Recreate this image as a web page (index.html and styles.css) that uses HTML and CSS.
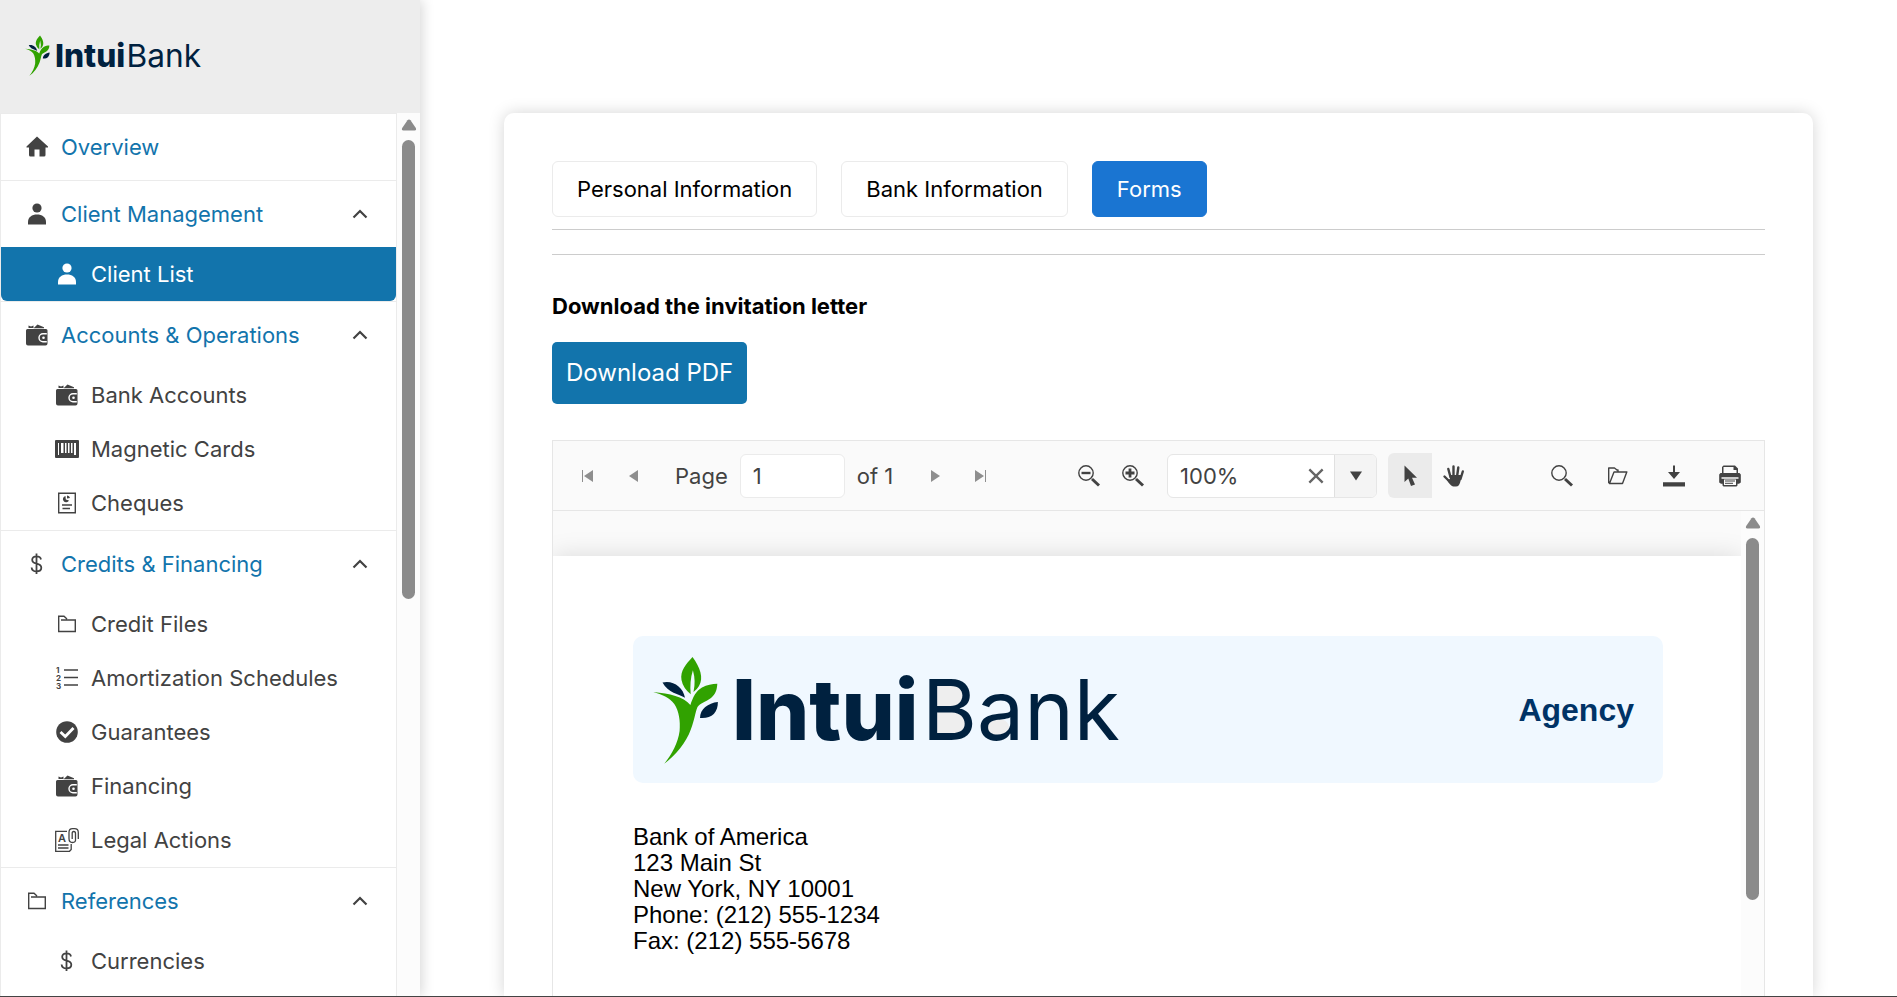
FILE: index.html
```html
<!DOCTYPE html>
<html lang="en">
<head>
<meta charset="utf-8">
<title>IntuiBank</title>
<link rel="stylesheet" href="styles.css">
</head>
<body>
<svg class="defs" aria-hidden="true">
  <symbol id="mark" viewBox="0 0 72 114">
    <path fill="#31a200" d="M42.500 4C50 14 54 25 49 33Q47 36.500 43.500 39Q46 28 42.900 17.300Q39.500 28 40.700 41.300Q33 35 31.500 27C30 18 36 11 42.500 4Z"/>
    <path fill="#31a200" d="M3.200 39C20 41 33 43 40.400 52C43 44 46 38 52 34.500C57 31.500 62 31 67.300 30.700C67 37 65.500 41 61 45C56 49 50 50 47.500 54C45 60 44.500 67 41 76C36 90 26 102 14.300 110.700C22 101 28 90 29.600 78C30.500 68 29 58 24.300 51C19.500 44.500 12 41.500 3.200 39Z"/>
    <path fill="#00213f" d="M12.500 29.500C23 27 33 34 35 44.700C29 41 18 40 12.500 29.500Z"/>
    <path fill="#00213f" d="M67.900 49C58 50 50 56 50 65C61 66 68 60 67.900 49Z"/>
  </symbol>
  <symbol id="home" viewBox="0 0 24 24"><path d="M12 1.500 23 11.500V12.500H20.500V20a1.500 1.500 0 0 1-1.500 1.500H14.500V14.500H9.500V21.500H5.500A1.500 1.500 0 0 1 4 20V12.500H1.500V11.500Z"/></symbol>
  <symbol id="user" viewBox="0 0 24 24"><circle cx="12" cy="6" r="4.600"/><path d="M3 22.500V20C3 15 7 12.500 12 12.500S21 15 21 20V22.500Z"/></symbol>
  <symbol id="wallet" viewBox="0 0 24 24"><path d="M3.500 5V2.500L6 3.500 8.500 2.500V5ZM8.500 5.300 12.500 1.500 19 4.200V5.300Z"/><path d="M2.500 6H21a1.500 1.500 0 0 1 1.500 1.500V20.500A2 2 0 0 1 20.500 22.500H3a2 2 0 0 1-2-2V7.500A1.500 1.500 0 0 1 2.500 6Z"/><path fill="none" stroke="#fff" stroke-width="1.400" d="M21.800 10.700H18a4 4 0 0 0 0 8H21.800"/><circle cx="18.500" cy="14.700" r="1.300" fill="#fff"/></symbol>
  <symbol id="barcode" viewBox="0 0 24 24"><path fill-rule="evenodd" d="M1 3H23a1 1 0 0 1 1 1V20a1 1 0 0 1-1 1H1a1 1 0 0 1-1-1V4A1 1 0 0 1 1 3ZM3 6V18H4V6ZM6 6V16H8.500V6ZM10 6V16H11.500V6ZM13 6V16H14.500V6ZM16 6V16H17.500V6ZM19 6V18H21V6Z"/></symbol>
  <symbol id="report" viewBox="0 0 24 24"><path fill="none" stroke="currentColor" stroke-width="1.400" d="M3.700 2.200H20.300V21.800H3.700ZM7 14H17M7.500 17.500H15"/><path d="M10.500 5A3.200 3.200 0 1 0 14 9.500L10.800 8.500ZM12 4.500V7.500L15 7A3 3 0 0 0 12 4.500Z"/></symbol>
  <symbol id="dollar" viewBox="0 0 24 24"><path fill="none" stroke="currentColor" stroke-width="1.800" d="M16 7.500C15.700 5.500 14 4.300 11.500 4.300S7.200 5.500 7.200 7.800 9 11.200 11.500 11.700 16.300 13 16.300 15.800 14 19.400 11.500 19.400 6.800 18 6.600 15.500M11.500 1.500V22"/></symbol>
  <symbol id="folder" viewBox="0 0 24 24"><path fill="none" stroke="currentColor" stroke-width="1.400" d="M6 8H20.300V19.500H3.700V4.200H9L12 7"/></symbol>
  <symbol id="check" viewBox="0 0 24 24"><circle cx="12" cy="12" r="10.800"/><path fill="none" stroke="#fff" stroke-width="2.800" d="M5.500 12 10.300 16.500 18.500 8"/></symbol>
  <symbol id="chevron" viewBox="0 0 24 24"><path fill="none" stroke="currentColor" stroke-width="2.200" d="M5.500 15.500 12 9 18.500 15.500"/></symbol>
  <symbol id="first" viewBox="0 0 24 24"><path d="M7 6H8V18H7ZM18 6V18L9 12Z"/></symbol>
  <symbol id="prev" viewBox="0 0 24 24"><path d="M17 6V18L8 12Z"/></symbol>
  <symbol id="next" viewBox="0 0 24 24"><path d="M8 6V18L17 12Z"/></symbol>
  <symbol id="last" viewBox="0 0 24 24"><path d="M16 6H17V18H16ZM6 6V18L15 12Z"/></symbol>
  <symbol id="search" viewBox="0 0 24 24"><g fill="none" stroke="currentColor"><circle cx="9" cy="9" r="7.200" stroke-width="1.400"/><path stroke-width="3" d="M15 15 22 21.500"/></g></symbol>
  <symbol id="zoomout" viewBox="0 0 24 24"><g fill="none" stroke="currentColor"><circle cx="9" cy="9" r="7.200" stroke-width="1.400"/><path stroke-width="3" d="M15 15 22 21.500"/><path stroke-width="2.400" d="M4.500 9H13.500"/></g></symbol>
  <symbol id="zoomin" viewBox="0 0 24 24"><g fill="none" stroke="currentColor"><circle cx="9" cy="9" r="7.200" stroke-width="1.400"/><path stroke-width="3" d="M15 15 22 21.500"/><path stroke-width="2.800" d="M4.500 9H13.500M9 4.500V13.500"/></g></symbol>
  <symbol id="close" viewBox="0 0 24 24"><path fill="none" stroke="currentColor" stroke-width="2.800" d="M4 4 20 20M20 4 4 20"/></symbol>
  <symbol id="caret" viewBox="0 0 24 24"><path d="M6 7.500H18L12 16.500Z"/></symbol>
  <symbol id="pointer" viewBox="0 0 24 24"><path d="M6.500 1.500V18L10.300 14.600 13 22 17 20.500 14 13.800H19Z"/></symbol>
  <symbol id="hand" viewBox="0 0 24 24"><path fill="none" stroke="currentColor" stroke-width="2.400" stroke-linecap="round" d="M2.500 12.500 8 18M6.300 5 8.500 13M11.500 2.500V12M16.300 3.500 15 13M20.800 7.500 18.500 15"/><path d="M7.400 11H19.600L18.500 17Q17.500 22.500 14 22.500H11.500Q9.500 22.500 6.500 18.500L5 16 8 15Z"/></symbol>
  <symbol id="open" viewBox="0 0 24 24"><path fill="none" stroke="currentColor" stroke-width="1.400" stroke-linejoin="round" d="M2.700 19.200V4H8.500L11 6M3.500 19.500H16.500L20.800 8H8ZM10.500 6H12V8"/></symbol>
  <symbol id="download" viewBox="0 0 24 24"><path d="M1 18.200H23V22.500H1ZM11 1.500H13V8H18L12 15 6 8H11Z"/></symbol>
  <symbol id="print" viewBox="0 0 24 24"><path fill-rule="evenodd" d="M4 9V3L5.500 1.500H17L20 4.500V9H21.500L22.800 10.500V18.500L21 19.700H19.500V21.500L18.500 22.500H5.500L4.500 21.500V19.700H3L1.200 18.500V10.500L2.500 9ZM5.500 3V9H18.500V6H15.500V3ZM6 15.500V21H18V15.500ZM3.500 13.300V14.700H20.500V13.300Z"/><path fill="none" stroke="currentColor" d="M7 17H17M7 19.300H15"/></symbol>
  <symbol id="arrow" viewBox="0 0 16 12"><path d="M8 .5Q8.900.5 9.500 1.200L14.800 9Q15.800 11.500 13.500 11.500H2.500Q.2 11.500 1.200 9L6.500 1.200Q7.100.5 8 .5Z"/></symbol>
</svg>
<div class="app">
  <aside class="sidebar">
    <header class="brand">
      <svg class="brand-logo" viewBox="0 0 488 114" role="img" aria-label="IntuiBank">
        <use href="#mark" width="72" height="114"/>
        <g class="word"><text x="82" y="87" class="word-bold">Intui</text><text x="272" y="87" class="word-light">Bank</text></g>
      </svg>
    </header>
    <div class="nav-wrap">
      <nav class="nav">
        <section class="group">
          <a class="head" href="#"><svg class="icon"><use href="#home"/></svg><span>Overview</span></a>
        </section>
        <section class="group">
          <a class="head" href="#"><svg class="icon"><use href="#user"/></svg><span>Client Management</span><svg class="icon chev"><use href="#chevron"/></svg></a>
          <a class="item active" href="#"><svg class="icon"><use href="#user"/></svg><span>Client List</span></a>
        </section>
        <section class="group">
          <a class="head" href="#"><svg class="icon"><use href="#wallet"/></svg><span>Accounts &amp; Operations</span><svg class="icon chev"><use href="#chevron"/></svg></a>
          <a class="item" href="#"><svg class="icon"><use href="#wallet"/></svg><span>Bank Accounts</span></a>
          <a class="item" href="#"><svg class="icon"><use href="#barcode"/></svg><span>Magnetic Cards</span></a>
          <a class="item" href="#"><svg class="icon"><use href="#report"/></svg><span>Cheques</span></a>
        </section>
        <section class="group">
          <a class="head" href="#"><svg class="icon"><use href="#dollar"/></svg><span>Credits &amp; Financing</span><svg class="icon chev"><use href="#chevron"/></svg></a>
          <a class="item" href="#"><svg class="icon"><use href="#folder"/></svg><span>Credit Files</span></a>
          <a class="item" href="#"><svg class="icon" viewBox="0 0 24 24"><path fill="none" stroke="currentColor" stroke-width="1.400" d="M9 4H23M9 11.500H23M9 19H23"/><g class="digits"><text x="1" y="7">1</text><text x="1" y="15">2</text><text x="1" y="23">3</text></g></svg><span>Amortization Schedules</span></a>
          <a class="item" href="#"><svg class="icon"><use href="#check"/></svg><span>Guarantees</span></a>
          <a class="item" href="#"><svg class="icon"><use href="#wallet"/></svg><span>Financing</span></a>
          <a class="item" href="#"><svg class="icon" viewBox="0 0 24 24"><path fill="none" stroke="currentColor" stroke-width="1.300" d="M12 3.300H.7V23.300H14.500L16.200 21.500V16M3 17H13.500M3 20H13.500M23.300 11V4.500Q23.300.7 19.500.7H17.500Q14 .7 14 4.500V10.500Q14 14.500 17.500 14.500T20.500 11V5.500Q20.500 3.500 18.800 3.500T17.200 5.500V11"/><text class="letter" x="3" y="14">A</text></svg><span>Legal Actions</span></a>
        </section>
        <section class="group">
          <a class="head" href="#"><svg class="icon"><use href="#folder"/></svg><span>References</span><svg class="icon chev"><use href="#chevron"/></svg></a>
          <a class="item" href="#"><svg class="icon"><use href="#dollar"/></svg><span>Currencies</span></a>
        </section>
      </nav>
      <div class="scroll"><svg class="scroll-up"><use href="#arrow"/></svg><div class="track"><div class="thumb nav-thumb"></div></div></div>
    </div>
  </aside>
  <main class="main">
    <div class="card">
      <div class="tabs">
        <button class="tab" type="button">Personal Information</button>
        <button class="tab" type="button">Bank Information</button>
        <button class="tab selected" type="button">Forms</button>
      </div>
      <hr class="rule">
      <hr class="rule second">
      <h2 class="title">Download the invitation letter</h2>
      <button class="pdf" type="button">Download PDF</button>
      <section class="viewer">
        <div class="toolbar">
          <div class="tools">
            <button class="tool dim" aria-label="First page"><svg class="icon"><use href="#first"/></svg></button>
            <button class="tool dim gap" aria-label="Previous page"><svg class="icon"><use href="#prev"/></svg></button>
            <label class="pager" for="page">Page</label>
            <input class="page-input" id="page" type="text" value="1">
            <span class="total">of 1</span>
            <button class="tool dim" aria-label="Next page"><svg class="icon"><use href="#next"/></svg></button>
            <button class="tool dim gap" aria-label="Last page"><svg class="icon"><use href="#last"/></svg></button>
          </div>
          <div class="tools">
            <button class="tool" aria-label="Zoom out"><svg class="icon"><use href="#zoomout"/></svg></button>
            <button class="tool" aria-label="Zoom in"><svg class="icon"><use href="#zoomin"/></svg></button>
            <div class="combo">
              <input class="zoom-input" type="text" value="100%" aria-label="Zoom level">
              <button class="clear" aria-label="Clear"><svg class="clear-icon"><use href="#close"/></svg></button>
              <button class="drop" aria-label="Open zoom levels"><svg class="icon"><use href="#caret"/></svg></button>
            </div>
            <button class="tool pressed" aria-label="Select text"><svg class="icon"><use href="#pointer"/></svg></button>
            <button class="tool" aria-label="Pan"><svg class="icon"><use href="#hand"/></svg></button>
          </div>
          <div class="tools spaced">
            <button class="tool" aria-label="Search"><svg class="icon"><use href="#search"/></svg></button>
            <button class="tool" aria-label="Open"><svg class="icon"><use href="#open"/></svg></button>
            <button class="tool" aria-label="Download"><svg class="icon"><use href="#download"/></svg></button>
            <button class="tool" aria-label="Print"><svg class="icon"><use href="#print"/></svg></button>
          </div>
        </div>
        <div class="canvas">
          <div class="canvas-body">
            <article class="sheet">
              <header class="letterhead">
                <svg class="letter-logo" viewBox="0 0 488 114" role="img" aria-label="IntuiBank">
                  <g fill="#eee"><path d="M282 30H306Q318 42 308 55H282ZM282 55H310Q324 70 310 83H282Z"/><ellipse cx="346" cy="74" rx="13" ry="9"/></g>
                  <use href="#mark" width="72" height="114"/>
                  <g class="word"><text x="82" y="87" class="word-bold">Intui</text><text x="272" y="87" class="word-light">Bank</text></g>
                </svg>
                <strong class="agency">Agency</strong>
              </header>
              <address class="address">Bank of America<br>123 Main St<br>New York, NY 10001<br>Phone: (212) 555-1234<br>Fax: (212) 555-5678</address>
            </article>
          </div>
          <div class="scroll"><svg class="scroll-up"><use href="#arrow"/></svg><div class="track"><div class="thumb doc-thumb"></div></div></div>
        </div>
      </section>
    </div>
  </main>
</div>
</body>
</html>
```

FILE: styles.css
```css
* { box-sizing: border-box; }

body {
  margin: 0;
  background: #fff;
  color: #000;
  font-family: Inter, "Open Sans", sans-serif;
  font-size: 22px;
  line-height: 30px;
}

button, input { font: inherit; color: inherit; margin: 0; }
button { cursor: pointer; }

.defs { position: absolute; width: 0; height: 0; }

.app {
  display: flex;
  height: 100vh;
  overflow: hidden;
  border-bottom: 1px solid #444;
}

.icon { display: block; flex: none; width: 24px; height: 24px; fill: currentColor; color: #424242; }
.digits { font-size: 8px; font-weight: 700; }
.letter { font-size: 11px; font-weight: 600; }

/* Sidebar */
.sidebar {
  flex: none;
  display: flex;
  flex-direction: column;
  width: 420px;
  background: #fff;
  box-shadow: 2px 0 12px rgba(0, 0, 0, .16);
}

.brand { flex: none; height: 113px; padding: 34px 24px; background: #ededed; }
.brand-logo { display: block; width: 184px; height: 43px; }

.word { font-family: Inter, sans-serif; font-size: 84px; fill: #00213f; }
.word-bold { font-weight: 800; }
.word-light { font-weight: 400; }

.nav-wrap { flex: 1; display: flex; min-height: 0; }
.nav { flex: 1; overflow: hidden; border: 1px solid #ebebeb; border-bottom: 0; }
.group { border-bottom: 1px solid #ebebeb; }
.group:last-child { border-bottom: 0; }

.head, .item { display: flex; align-items: center; gap: 12px; text-decoration: none; }
.head { height: 66px; padding: 0 24px; color: #1274ac; }
.item { height: 54px; padding: 0 24px 0 54px; color: #424242; }
.chev { margin-left: auto; }
.active { background: #1274ac; border-radius: 0 0 6px 6px; color: #fff; }
.active .icon { color: #fff; }

.scroll {
  flex: none;
  display: flex;
  flex-direction: column;
  align-items: center;
  gap: 9px;
  width: 23px;
  padding: 6px 0;
  background: #fcfcfc;
}
.scroll-up { flex: none; width: 16px; height: 12px; fill: #8b8b8b; }
.track { flex: 1; width: 13px; }
.thumb { border-radius: 7px; background: #8b8b8b; }
.nav-thumb { height: 54%; }
.doc-thumb { height: 80%; }

/* Content card */
.main { flex: 1; display: flex; min-width: 0; padding: 113px 84px 0; }
.card {
  flex: 1;
  display: flex;
  flex-direction: column;
  min-width: 0;
  padding: 48px 48px 0;
  border-radius: 10px 10px 0 0;
  box-shadow: 0 0 16px rgba(0, 0, 0, .17);
}

.tabs { display: flex; gap: 24px; }
.tab {
  height: 56px;
  padding: 0 24px;
  border: 1px solid #ebebeb;
  border-radius: 6px;
  background: #fff;
}
.selected { border-color: #1a75d2; background: #1a75d2; color: #fff; }

.rule { width: 100%; height: 1px; margin: 12px 0 0; border: 0; background: #ccc; }
.second { margin-top: 24px; }

.title { margin: 36px 0 0; font-size: 22px; line-height: 30px; font-weight: 700; }
.pdf {
  align-self: flex-start;
  height: 62px;
  margin-top: 21px;
  padding: 0 14px;
  border: 0;
  border-radius: 5px;
  background: #1274ac;
  color: #fff;
  font-size: 24px;
}

/* Document viewer */
.viewer {
  flex: 1;
  display: flex;
  flex-direction: column;
  min-height: 0;
  margin-top: 36px;
  border: 1px solid #e6e6e6;
  border-bottom: 0;
  background: #fafafa;
  color: #424242;
}
.toolbar {
  flex: none;
  display: flex;
  justify-content: space-between;
  align-items: center;
  height: 70px;
  padding: 0 12px;
  border-bottom: 1px solid #e6e6e6;
}
.tools { display: flex; align-items: center; }
.spaced { gap: 12px; }
.tool {
  display: flex;
  align-items: center;
  justify-content: center;
  width: 44px;
  height: 45px;
  padding: 0;
  border: 0;
  background: transparent;
}
.gap { margin-left: 2px; }
.dim .icon { color: #8e8e8e; }
.pressed { border-radius: 6px 0 0 6px; background: #ebebeb; }

.pager { margin: 0 12px 0 20px; }
.total { margin: 0 20px 0 12px; }
.page-input {
  width: 105px;
  height: 44px;
  padding: 0 12px;
  border: 1px solid #ebebeb;
  border-radius: 6px;
  background: #fff;
}
.combo {
  display: flex;
  width: 210px;
  height: 44px;
  margin: 0 11px 0 12px;
  border: 1px solid #e6e6e6;
  border-radius: 6px;
  background: #fff;
  overflow: hidden;
}
.zoom-input { flex: 1; min-width: 0; padding: 0 12px; border: 0; background: transparent; }
.clear { display: flex; align-items: center; justify-content: center; width: 36px; padding: 0; border: 0; background: transparent; }
.clear-icon { width: 20px; height: 20px; color: #666; }
.drop {
  display: flex;
  align-items: center;
  justify-content: center;
  width: 42px;
  padding: 0;
  border: 0;
  border-left: 1px solid #e0e0e0;
  background: #f4f4f4;
}

.canvas { flex: 1; display: flex; min-height: 0; }
.canvas-body { flex: 1; display: flex; min-width: 0; padding-top: 45px; overflow: hidden; }
.sheet { flex: 1; padding: 80px 78px 0 80px; background: #fff; box-shadow: 0 0 24px rgba(0, 0, 0, .13); color: #000; }
.letterhead {
  display: flex;
  align-items: center;
  justify-content: space-between;
  height: 147px;
  padding: 0 29px 0 17px;
  border-radius: 10px;
  background: #f0f8ff;
}
.letter-logo { display: block; width: 488px; height: 114px; }
.agency { font-family: "Liberation Sans", Arial, sans-serif; font-size: 32px; color: #036; }
.address {
  margin-top: 41px;
  font-family: "Liberation Sans", Arial, sans-serif;
  font-size: 24px;
  line-height: 26px;
  font-style: normal;
}
```
